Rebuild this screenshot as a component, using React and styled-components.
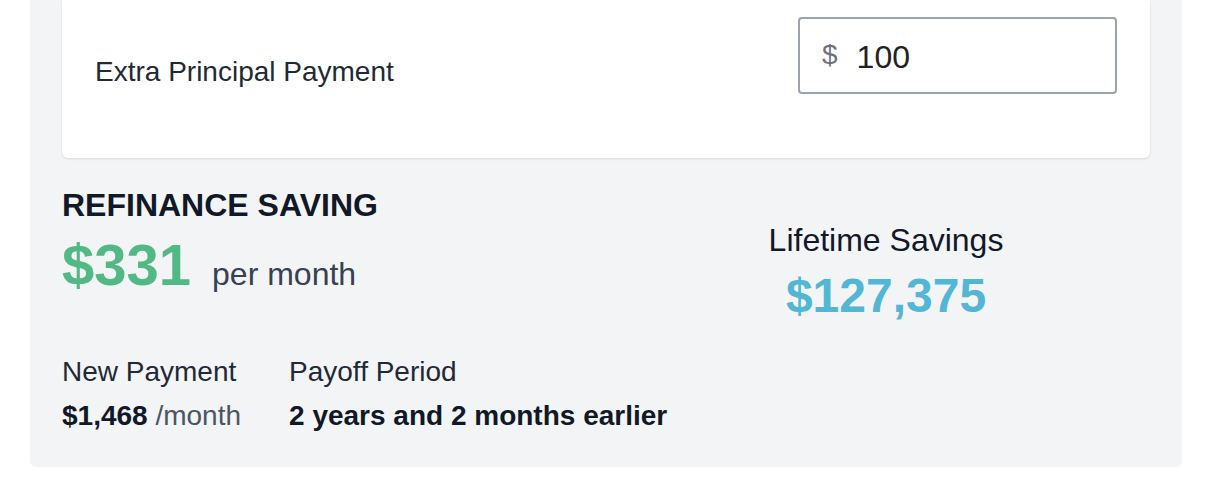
import React from "react"
import styled, { createGlobalStyle } from "styled-components"

const GlobalStyle = createGlobalStyle`
  html, body {
    margin: 0;
    padding: 0;
    background: #ffffff;
    font-family: "Liberation Sans", Arial, sans-serif;
  }
`

const Page = styled.div`
  padding: 0 28px 19px 30px;
`

const Panel = styled.section`
  background: #f3f4f6;
  border-radius: 0 0 6px 6px;
  padding: 0 32px 29px 32px;
`

const Card = styled.div`
  background: #ffffff;
  border-radius: 0 0 6px 6px;
  box-shadow: 0 1px 3px rgba(0, 0, 0, 0.08), 0 1px 2px rgba(0, 0, 0, 0.04);
  padding: 17px 33px 64px 33px;
  display: flex;
  justify-content: space-between;
  align-items: flex-start;
`

const FieldLabel = styled.label`
  margin-top: 35px;
  font-size: 28px;
  line-height: 40px;
  color: #1f2937;
`

const InputBox = styled.div`
  width: 319px;
  height: 77px;
  box-sizing: border-box;
  border: 2px solid #9ca3af;
  border-radius: 4px;
  display: flex;
  align-items: flex-start;
  padding: 16px 22px 0 22px;
  gap: 19px;
`

const Prefix = styled.span`
  font-size: 28px;
  line-height: 40px;
  color: #6b7280;
`

const Value = styled.span`
  margin-top: 2px;
  font-size: 32px;
  line-height: 40px;
  color: #222222;
`

const Summary = styled.div`
  display: grid;
  grid-template-columns: 1fr 1fr;
  column-gap: 32px;
  margin-top: 27px;
`

const Heading = styled.h2`
  margin: 0;
  font-size: 32px;
  line-height: 40px;
  font-weight: 700;
  color: #111827;
`

const BigRow = styled.div`
  display: flex;
  align-items: baseline;
  gap: 21px;
  margin-top: 10px;
`

const BigAmount = styled.span`
  font-size: 58px;
  line-height: 60px;
  font-weight: 700;
  color: #52b886;
`

const Unit = styled.span`
  font-size: 32px;
  color: #374151;
`

const Lifetime = styled.div`
  text-align: center;
  margin-top: 35px;
`

const LifetimeLabel = styled.div`
  font-size: 32px;
  line-height: 40px;
  color: #111827;
`

const LifetimeAmount = styled.div`
  margin-top: 8px;
  font-size: 48px;
  line-height: 56px;
  font-weight: 700;
  color: #52b6d5;
`

const Details = styled.div`
  display: flex;
  gap: 48px;
  margin-top: 26px;
`

const Detail = styled.div`
  display: flex;
  flex-direction: column;
`

const DetailLabel = styled.span`
  font-size: 28px;
  line-height: 44px;
  color: #1f2937;
`

const DetailValue = styled.span`
  font-size: 28px;
  line-height: 44px;
  font-weight: 700;
  color: #111827;
`

const DetailUnit = styled.span`
  font-weight: 400;
  color: #4b5563;
`

export default function App() {
  return (
    <>
      <GlobalStyle />
      <Page>
        <Panel>
          <Card>
            <FieldLabel>Extra Principal Payment</FieldLabel>
            <InputBox>
              <Prefix>$</Prefix>
              <Value>100</Value>
            </InputBox>
          </Card>

          <Summary>
            <div>
              <Heading>REFINANCE SAVING</Heading>
              <BigRow>
                <BigAmount>$331</BigAmount>
                <Unit>per month</Unit>
              </BigRow>
            </div>
            <Lifetime>
              <LifetimeLabel>Lifetime Savings</LifetimeLabel>
              <LifetimeAmount>$127,375</LifetimeAmount>
            </Lifetime>
          </Summary>

          <Details>
            <Detail>
              <DetailLabel>New Payment</DetailLabel>
              <DetailValue>
                $1,468 <DetailUnit>/month</DetailUnit>
              </DetailValue>
            </Detail>
            <Detail>
              <DetailLabel>Payoff Period</DetailLabel>
              <DetailValue>2 years and 2 months earlier</DetailValue>
            </Detail>
          </Details>
        </Panel>
      </Page>
    </>
  )
}
